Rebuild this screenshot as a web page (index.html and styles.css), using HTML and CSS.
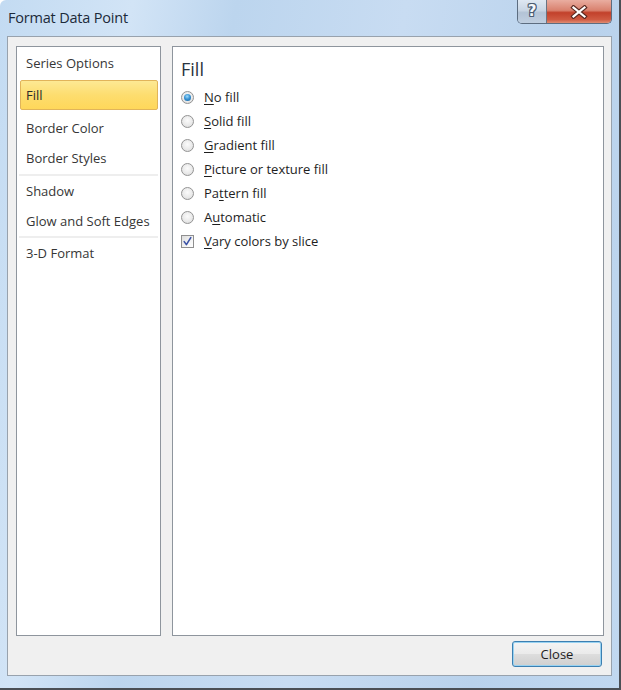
FILE: index.html
```html
<!DOCTYPE html>
<html>
<head>
<meta charset="utf-8">
<title>Format Data Point</title>
<link rel="stylesheet" href="styles.css">
</head>
<body>
<div class="window">
  <div class="titlebar">
    <div class="title">Format Data Point</div>
    <div class="caption-buttons">
      <div class="cap help"><span>?</span></div>
      <div class="cap close"><svg width="18" height="14" viewBox="0 0 18 14"><path d="M3.5 2.5 L14.5 11.5 M14.5 2.5 L3.5 11.5" fill="none" stroke="#5b2a22" stroke-width="4.4" stroke-linecap="square"/><path d="M3.5 2.5 L14.5 11.5 M14.5 2.5 L3.5 11.5" fill="none" stroke="#ffffff" stroke-width="2.2" stroke-linecap="square"/></svg></div>
    </div>
  </div>
  <div class="client">
    <div class="panels">
      <div class="nav">
        <div class="group first">
          <div class="nav-item">Series Options</div>
          <div class="nav-item selected">Fill</div>
          <div class="nav-item after-sel">Border Color</div>
          <div class="nav-item">Border Styles</div>
        </div>
        <div class="group">
          <div class="nav-item">Shadow</div>
          <div class="nav-item">Glow and Soft Edges</div>
        </div>
        <div class="group last">
          <div class="nav-item">3-D Format</div>
        </div>
      </div>
      <div class="content">
        <div class="heading">Fill</div>
        <div class="option"><span class="radio checked"></span><span class="label"><u>N</u>o fill</span></div>
        <div class="option"><span class="radio"></span><span class="label"><u>S</u>olid fill</span></div>
        <div class="option"><span class="radio"></span><span class="label"><u>G</u>radient fill</span></div>
        <div class="option"><span class="radio"></span><span class="label"><u>P</u>icture or texture fill</span></div>
        <div class="option"><span class="radio"></span><span class="label">Pa<u>t</u>tern fill</span></div>
        <div class="option"><span class="radio"></span><span class="label">A<u>u</u>tomatic</span></div>
        <div class="option"><span class="checkbox"><svg width="11" height="11" viewBox="0 0 11 11"><path d="M2.2 5.6 L4.4 8.6 L8.8 1.6" fill="none" stroke="#3b52a6" stroke-width="1.6" stroke-linejoin="round" stroke-linecap="round"/></svg></span><span class="label"><u>V</u>ary colors by slice</span></div>
      </div>
    </div>
    <div class="buttons">
      <div class="btn">Close</div>
    </div>
  </div>
</div>
</body>
</html>
```
FILE: styles.css
```css
html, body {
  margin: 0;
  padding: 0;
  background: #ffffff;
}

body {
  font-family: "Open Sans", "Noto Sans", "Liberation Sans", sans-serif;
  font-size: 13px;
  color: #1e1e1e;
}

.window {
  width: 621px;
  height: 690px;
  box-sizing: border-box;
  padding: 0 7px 12px 7px;
  border-right: 2px solid #4b4f55;
  border-bottom: 2px solid #4b4f55;
  border-top-left-radius: 6px;
  background: linear-gradient(100deg, #c3dbf2 0%, #d2e4f6 18%, #bcd5ee 32%, #c8dcf2 55%, #b9d2ec 80%, #c1d8f0 100%);
  display: flex;
  flex-direction: column;
}

.titlebar {
  height: 36px;
  flex: none;
  display: flex;
  justify-content: space-between;
  align-items: flex-start;
}

.title {
  padding: 8px 0 0 1px;
  font-size: 14.5px;
  color: #1c2a3a;
  letter-spacing: -0.2px;
}

.caption-buttons {
  display: flex;
  height: 24px;
  border: 1px solid #5d6d80;
  border-top: none;
  border-radius: 0 0 5px 5px;
  overflow: hidden;
  box-sizing: border-box;
}

.cap {
  height: 100%;
  display: flex;
  align-items: center;
  justify-content: center;
}

.help {
  width: 28px;
  background: linear-gradient(#dfe8f2 0%, #c9d6e4 45%, #b3c3d6 55%, #c0cfe0 100%);
  border-right: 1px solid #6a7482;
  font-family: "DejaVu Sans", "Liberation Sans", sans-serif;
  font-weight: bold;
  font-size: 15px;
  color: #f4f7fb;
  text-shadow: 1px 0 0 #4d5d72, -1px 0 0 #4d5d72, 0 1px 0 #4d5d72, 0 -1px 0 #4d5d72, 1px 1px 0 #4d5d72, -1px -1px 0 #4d5d72, 1px -1px 0 #4d5d72, -1px 1px 0 #4d5d72;
}

.help span {
  margin-top: -1px;
}

.close {
  width: 64px;
  background: linear-gradient(#e9ada0 0%, #d9816e 45%, #c2412b 55%, #cf5a42 85%, #e08c72 100%);
}

.close svg {
  display: block;
}

.client {
  flex: 1;
  background: #f0f0f0;
  border: 1px solid #98a2ad;
  padding: 9px 7px 8px 8px;
  display: flex;
  flex-direction: column;
}

.panels {
  height: 590px;
  display: flex;
  gap: 11px;
}

.nav {
  width: 145px;
  box-sizing: border-box;
  background: #ffffff;
  border: 1px solid #8e959d;
  padding-top: 1px;
}

.group {
  border-bottom: 2px solid #eeeeee;
  margin: 0 2px;
}

.group.first {
  padding-bottom: 1px;
}

.group.last {
  border-bottom: none;
}

.nav-item {
  height: 30px;
  line-height: 30px;
  padding-left: 7px;
  color: #363636;
  white-space: nowrap;
}

.nav-item.selected {
  margin: 2px 0 0 1px;
  height: 28px;
  line-height: 28px;
  padding-left: 5px;
  border: 1px solid #e1b45a;
  border-radius: 2px;
  background: linear-gradient(#fde994 0%, #fddd6f 50%, #ffd75a 100%);
  color: #2b2b2b;
}

.nav-item.after-sel {
  margin-top: 3px;
}

.content {
  flex: 1;
  background: #ffffff;
  border: 1px solid #8e959d;
  padding: 10px 0 0 8px;
}

.heading {
  font-size: 18px;
  color: #2a3440;
  height: 28px;
  line-height: 24px;
}

.option {
  height: 24px;
  display: flex;
  align-items: center;
  white-space: nowrap;
}

.label {
  margin-left: 10px;
  color: #1e1e1e;
}

.label u {
  text-decoration-thickness: 1px;
  text-underline-offset: 2px;
}

.radio {
  width: 13px;
  height: 13px;
  box-sizing: border-box;
  border-radius: 50%;
  border: 1px solid #939393;
  background: radial-gradient(circle at 50% 40%, #fbfbfb 0%, #eaeaea 55%, #d6d6d6 100%);
  display: flex;
  align-items: center;
  justify-content: center;
  flex: none;
}

.radio.checked::after {
  content: "";
  width: 7px;
  height: 7px;
  border-radius: 50%;
  background: radial-gradient(circle at 45% 35%, #9fdcfb 0%, #3a94d4 45%, #135f9c 100%);
}

.checkbox {
  width: 13px;
  height: 13px;
  box-sizing: border-box;
  border: 1px solid #8f8f8f;
  background: linear-gradient(135deg, #dcdcdc 0%, #f4f4f4 60%, #ffffff 100%);
  display: flex;
  align-items: center;
  justify-content: center;
  flex: none;
}

.checkbox svg {
  display: block;
}

.buttons {
  margin-top: 5px;
  display: flex;
  justify-content: flex-end;
  padding-right: 2px;
}

.btn {
  width: 90px;
  height: 26px;
  box-sizing: border-box;
  border: 1px solid #3c7fb1;
  border-radius: 3px;
  box-shadow: inset 0 0 0 1px #98d2f1;
  background: linear-gradient(#f4f4f4 0%, #ebebeb 48%, #dddddd 52%, #cfcfcf 100%);
  display: flex;
  align-items: center;
  justify-content: center;
  color: #1e1e1e;
}
```
